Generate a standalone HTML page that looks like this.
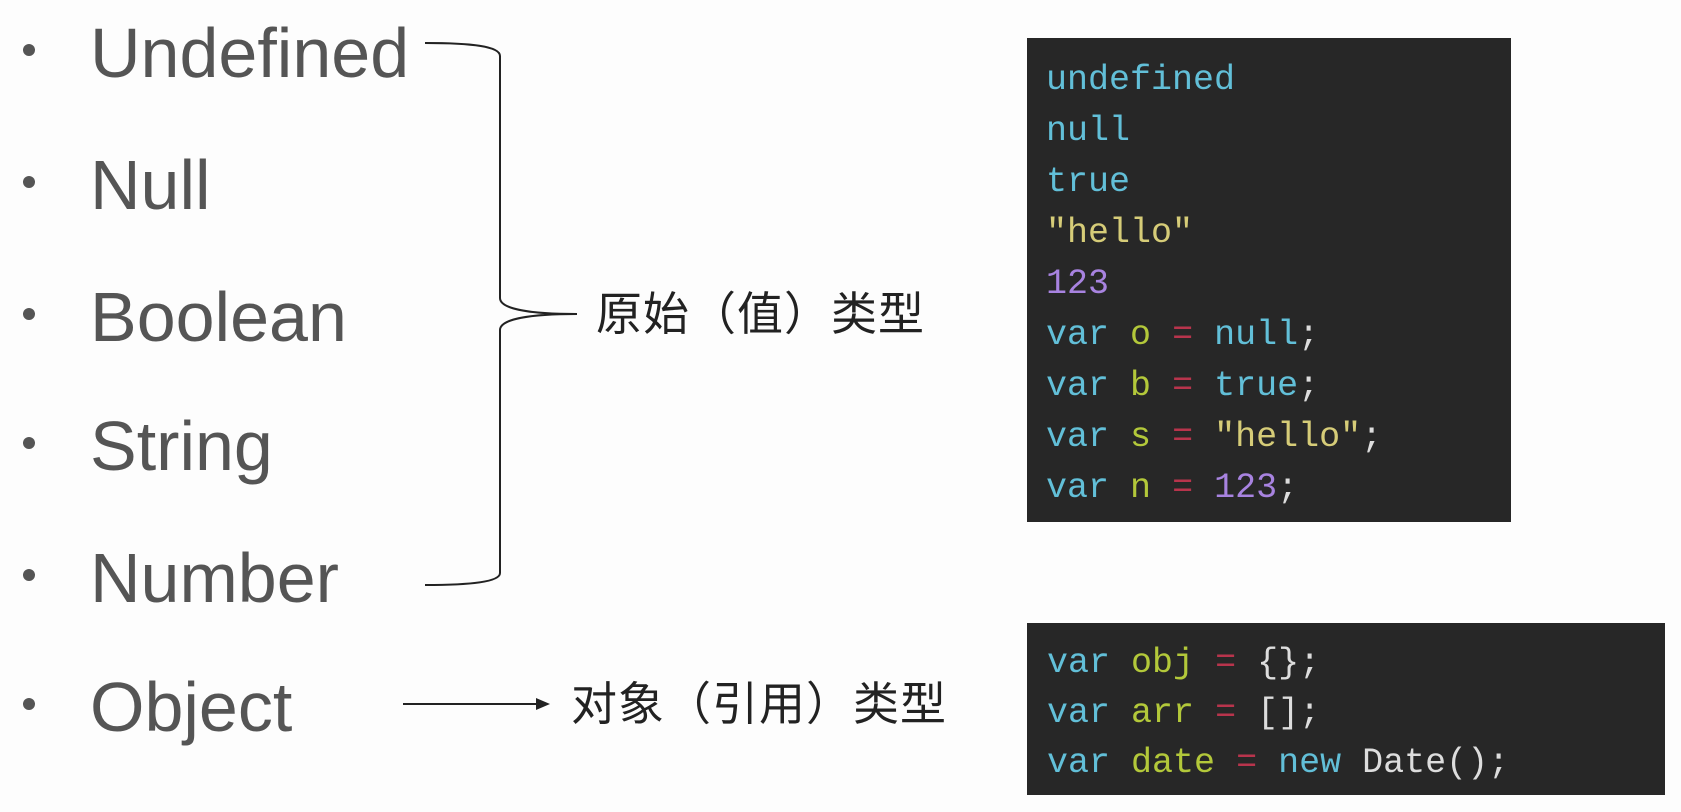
<!DOCTYPE html>
<html><head><meta charset="utf-8"><style>
html,body{margin:0;padding:0;background:#fdfdfd;width:1681px;height:812px;overflow:hidden;position:relative}
.it{position:absolute;left:90px;font-family:"Liberation Sans",sans-serif;font-size:70px;line-height:80px;color:#555;white-space:nowrap}
.b{position:absolute;left:23px;width:12px;height:12px;border-radius:50%;background:#555}
.cn{position:absolute;font-family:"Liberation Sans","Noto Sans CJK SC",sans-serif;font-size:46px;line-height:48px;color:#222;white-space:nowrap;letter-spacing:1px}
.box{position:absolute;background:#272727}
.code{position:absolute;font-family:"Liberation Mono",monospace;font-size:35px;color:#ddd;white-space:pre}
.k{color:#62bfd8}.s{color:#d6cc78}.n{color:#a883e0}.v{color:#b3c83a}.o{color:#b8344c}.w{color:#ddd}
</style></head><body>
<div class="b" style="top:44px"></div><div class="it" style="top:13px">Undefined</div>
<div class="b" style="top:176px"></div><div class="it" style="top:145px">Null</div>
<div class="b" style="top:308px"></div><div class="it" style="top:277px">Boolean</div>
<div class="b" style="top:437px"></div><div class="it" style="top:406px">String</div>
<div class="b" style="top:569px"></div><div class="it" style="top:538px">Number</div>
<div class="b" style="top:698px"></div><div class="it" style="top:667px">Object</div>

<svg width="1681" height="812" style="position:absolute;left:0;top:0" xmlns="http://www.w3.org/2000/svg">
<path d="M425 43 C470 43 500 46 500 56 L500 298 C500 309 530 314 577 314 C530 314 500 319 500 330 L500 573 C500 582 470 585 425 585" fill="none" stroke="#222" stroke-width="2"/>
<line x1="403" y1="704" x2="538" y2="704" stroke="#222" stroke-width="2"/>
<polygon points="536,698 550,704 536,710" fill="#222"/>
</svg>

<div class="cn" style="left:596px;top:290px">原始（值）类型</div>
<div class="cn" style="left:571px;top:680px">对象（引用）类型</div>

<div class="box" style="left:1027px;top:38px;width:484px;height:484px"></div>
<div class="code" style="left:1046px;top:55px;line-height:51px"><span class="k">undefined</span>
<span class="k">null</span>
<span class="k">true</span>
<span class="s">"hello"</span>
<span class="n">123</span>
<span class="k">var</span> <span class="v">o</span> <span class="o">=</span> <span class="k">null</span>;
<span class="k">var</span> <span class="v">b</span> <span class="o">=</span> <span class="k">true</span>;
<span class="k">var</span> <span class="v">s</span> <span class="o">=</span> <span class="s">"hello"</span>;
<span class="k">var</span> <span class="v">n</span> <span class="o">=</span> <span class="n">123</span>;</div>

<div class="box" style="left:1027px;top:623px;width:638px;height:172px"></div>
<div class="code" style="left:1047px;top:638px;line-height:50px"><span class="k">var</span> <span class="v">obj</span> <span class="o">=</span> {};
<span class="k">var</span> <span class="v">arr</span> <span class="o">=</span> [];
<span class="k">var</span> <span class="v">date</span> <span class="o">=</span> <span class="k">new</span> Date();</div>
</body></html>
